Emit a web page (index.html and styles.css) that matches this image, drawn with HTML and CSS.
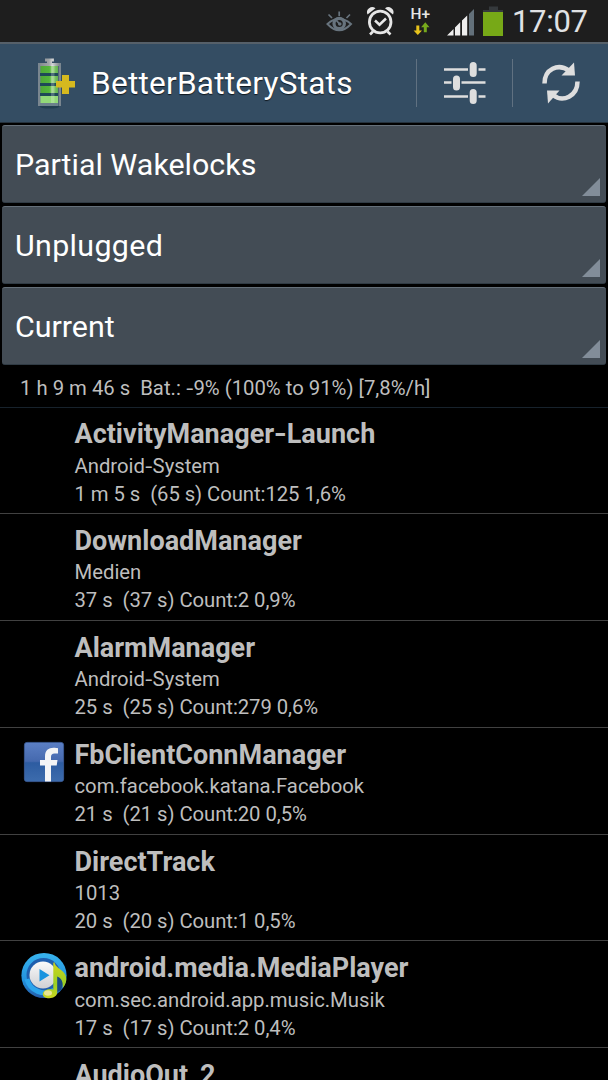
FILE: index.html
```html
<!DOCTYPE html>
<html lang="en">
<head>
<meta charset="utf-8">
<title>BetterBatteryStats</title>
<link rel="stylesheet" href="styles.css">
</head>
<body>
<div class="screen">
  <header class="status">
    <svg class="status-icons" width="204" height="42" viewBox="308 0 204 42">
      <g fill="none" stroke="#68747e">
        <path d="M327.500 24Q339.200 13.500 351 24Q339.200 36.500 327.500 24Z" stroke-width="2"/>
        <circle cx="339.200" cy="23.500" r="5.200" stroke-width="3.200"/>
        <path d="M336.500 20.500l3 3.500M339.200 11.500v4.500M328.500 14.500l3.500 3.500M350 14.500l-3.500 3.500" stroke-width="1.700"/>
      </g>
      <circle cx="339.800" cy="24" r="1.800" fill="#68747e"/>
      <g fill="none" stroke="#e6e6e6">
        <circle cx="380.200" cy="22" r="10.800" stroke-width="2.800"/>
        <path d="M375 20.500l4.500 4.200 6.500-6.200" stroke-width="2.500"/>
        <path d="M373 31.500l-3 3M387.500 31.500l3 3" stroke-width="2.600"/>
      </g>
      <path d="M367.500 14.500a5.200 5.200 0 0 1 8-6.200ZM393 14.500a5.200 5.200 0 0 0-8-6.200Z" fill="#e6e6e6"/>
      <text class="net" x="410.500" y="18.800">H+</text>
      <path d="M416.300 25.500h3v5h2.700l-4.200 4.500-4.200-4.500h2.700z" fill="#e8c31c"/>
      <path d="M425.300 22.300l4.200 5h-2.700v5h-3v-5h-2.700z" fill="#76a91c"/>
      <path d="M447 35.500l6.500-6.500v6.500zM455 27.500l5.200-5.200v13.200H455zM462 20.500l5.200-5v20H462z" fill="#eee"/>
      <path d="M469 14l5-5v26.500h-5z" fill="#63707a"/>
      <path d="M489 6.500h9v3.500h5v3h-20v-3h6z" fill="#35393c"/>
      <path d="M483 12h20v24h-20z" fill="#77a917"/>
    </svg>
    <span class="clock">17:07</span>
  </header>

  <div class="actionbar">
    <svg class="app-icon" width="40" height="54" viewBox="36 56 40 54">
      <defs>
        <linearGradient id="metal"><stop offset="0" stop-color="#7d848a"/><stop offset=".5" stop-color="#a1a5a8"/><stop offset=".65" stop-color="#d0d2d3"/><stop offset="1" stop-color="#777e84"/></linearGradient>
        <linearGradient id="cell"><stop offset="0" stop-color="#4fa837"/><stop offset=".5" stop-color="#55b63b"/><stop offset=".68" stop-color="#90cf79"/><stop offset="1" stop-color="#60b34b"/></linearGradient>
      </defs>
      <ellipse cx="49.500" cy="106.500" rx="10" ry="2" fill="#223e50"/>
      <path d="M45 58.500h9v3h-2v2h-5v-2h-2zM38 63h22v3H38z" fill="url(#metal)"/>
      <path d="M38 63h2v43h-2zM59 63h2v43h-2z" fill="#7a868f"/>
      <path d="M40 66h18.500v40H40z" fill="#6c818b"/>
      <path d="M40 73h18v3H40zM40 83h18v3H40zM40 93h18v3H40z" fill="#1f4957"/>
      <path d="M40.500 66H58v7H40.500zM40.500 76H58v7H40.500zM40.500 86H58v7H40.500z" fill="url(#cell)"/>
      <path d="M40.500 96H58v7H40.500z" fill="#92d978"/>
      <path d="M51 65h3.500v38H51z" fill="#fff" opacity=".22"/>
      <path d="M62 75h7v6h6v6.500h-6V94h-7v-6.500h-6V81h6z" fill="#d6b91f"/>
    </svg>
    <h1 class="app-title">BetterBatteryStats</h1>
    <div class="action">
      <svg width="42" height="44" viewBox="0 0 42 44">
        <path d="M0 8.500h24M34.500 8.500H41.500M0 21.500h7.500M17.500 21.500h24M0 35.500h24M34.500 35.500H41.500" stroke="#dedede" stroke-width="2.400"/>
        <path d="M29.200 4.500v8M12.500 18v8M29.200 31.500v8" stroke="#dedede" stroke-width="7" stroke-linecap="round"/>
      </svg>
    </div>
    <div class="action">
      <svg width="40" height="44" viewBox="0 0 40 44">
        <path d="M3.500 22.500C3.500 8 17 2 28 9.500" fill="none" stroke="#dedede" stroke-width="4.500"/>
        <path d="M33 1.500l1 13H20.500z" fill="#dedede"/>
        <path d="M36.500 20.500C36.500 35 22 42 12 34" fill="none" stroke="#dedede" stroke-width="4.500"/>
        <path d="M7 42.500L6 29.500H18.500z" fill="#dedede"/>
      </svg>
    </div>
  </div>

  <div class="spinners">
    <div class="spinner"><span>Partial Wakelocks</span></div>
    <div class="spinner"><span class="wide">Unplugged</span></div>
    <div class="spinner"><span>Current</span></div>
  </div>

  <div class="summary">1 h 9 m 46 s&nbsp; Bat.: <span class="dash">-</span>9% (100% to 91%) [7,8%/h]</div>

  <main class="list">
    <div class="row"><div class="icon"></div><div class="body"><h2>ActivityManager<span class="dash">-</span>Launch</h2><p>Android<span class="dash">-</span>System</p><p class="stat">1 m 5 s&nbsp; (65 s) Count:125 1,6%</p></div></div>
    <div class="row"><div class="icon"></div><div class="body"><h2>DownloadManager</h2><p>Medien</p><p class="stat">37 s&nbsp; (37 s) Count:2 0,9%</p></div></div>
    <div class="row"><div class="icon"></div><div class="body"><h2>AlarmManager</h2><p>Android<span class="dash">-</span>System</p><p class="stat">25 s&nbsp; (25 s) Count:279 0,6%</p></div></div>
    <div class="row">
      <div class="icon">
        <svg width="48" height="48" viewBox="0 0 48 48">
          <defs><linearGradient id="fb" x2="0" y2="1"><stop offset="0" stop-color="#5b7fc4"/><stop offset=".48" stop-color="#4569ae"/><stop offset=".52" stop-color="#2d5ca1"/><stop offset="1" stop-color="#3d6cad"/></linearGradient></defs>
          <rect x="4.400" y="4.400" width="39.200" height="39.200" rx="2.500" fill="url(#fb)" stroke="#3d5f9c" stroke-width=".8"/>
          <path d="M25 43.500V27.500H20V22h5v-3.500c0-6 3.500-8.700 8.500-8.700 2 0 3.500.2 4.500.5v5.200h-3.500c-2.500 0-3.500 1.200-3.500 3.500v3h6.500l-.8 5.500H31v16z" fill="#f3f4f6"/>
        </svg>
      </div>
      <div class="body"><h2>FbClientConnManager</h2><p>com.facebook.katana.Facebook</p><p class="stat">21 s&nbsp; (21 s) Count:20 0,5%</p></div>
    </div>
    <div class="row"><div class="icon"></div><div class="body"><h2>DirectTrack</h2><p>1013</p><p class="stat">20 s&nbsp; (20 s) Count:1 0,5%</p></div></div>
    <div class="row">
      <div class="icon">
        <svg width="48" height="48" viewBox="0 0 48 48">
          <defs>
            <linearGradient id="ring" x2="0" y2="1"><stop offset="0" stop-color="#38b4ef"/><stop offset=".6" stop-color="#2492dd"/><stop offset="1" stop-color="#245ba8"/></linearGradient>
            <linearGradient id="disc" x2="0" y2="1"><stop offset="0" stop-color="#fafafa"/><stop offset="1" stop-color="#cfd0d4"/></linearGradient>
            <linearGradient id="note" x2="0" y2="1"><stop offset="0" stop-color="#d0d51c"/><stop offset=".6" stop-color="#9bcf24"/><stop offset="1" stop-color="#c9d61f"/></linearGradient>
          </defs>
          <circle cx="24" cy="24.500" r="22.600" fill="url(#ring)"/>
          <circle cx="23.500" cy="24" r="17" fill="#1f5fae"/>
          <path d="M7 28a18 18 0 0 0 27 11" fill="none" stroke="#2ba4ec" stroke-width="5"/>
          <circle cx="23" cy="24" r="13.500" fill="url(#disc)"/>
          <path d="M19.500 18l10 6.200-10 6.300z" fill="#1993df"/>
          <path d="M36 15l9 12-4 12-6 3z" fill="#174983"/>
          <path d="M34.300 11c1 7 12.700 8 12 18-.3 4-2.500 6.500-3.500 8 .2-6-.8-9.500-5.600-11.500V41c0 4-3.500 6.200-8 6.200-3.600 0-6.400-1.200-6.400-4 0-3.500 5-5.700 10.500-4.500V12z" fill="url(#note)"/>
          <ellipse cx="28" cy="42" rx="4" ry="2.800" fill="#f3eab0" opacity=".8"/>
        </svg>
      </div>
      <div class="body"><h2>android.media.MediaPlayer</h2><p>com.sec.android.app.music.Musik</p><p class="stat">17 s&nbsp; (17 s) Count:2 0,4%</p></div>
    </div>
    <div class="row"><div class="icon"></div><div class="body"><h2>AudioOut_2</h2></div></div>
  </main>
</div>
</body>
</html>
```

FILE: styles.css
```css
* { box-sizing: border-box; }
body { margin: 0; background: #000; font-family: Roboto, "Noto Sans", sans-serif; }
h1, h2, p { margin: 0; font-weight: 400; }
svg { display: block; }
.screen { width: 608px; height: 1080px; overflow: hidden; background: #000; display: flex; flex-direction: column; }
.status { height: 42px; flex: none; background: #1e1e1e; display: flex; justify-content: flex-end; }
.status-icons { flex: none; }
.net { font: 500 15.5px Roboto, sans-serif; fill: #e6e6e6; }
.clock { width: 96px; color: #e0e2e4; font-size: 31px; line-height: 43px; letter-spacing: -0.3px; }
.actionbar { height: 81px; flex: none; background: #344d63; border-top: 2px solid #566069; border-bottom: 1px solid #25323d; display: flex; align-items: center; padding-left: 36px; }
.app-icon { flex: none; }
.app-title { flex: 1; padding: 2px 0 0 15px; font-size: 31.6px; line-height: 40px; letter-spacing: 0.22px; color: #fff; white-space: nowrap; text-shadow: 0 1px 1px #10181f; }
.action { width: 96px; height: 48px; border-left: 1px solid #607181; display: flex; align-items: center; justify-content: center; }
.spinners { display: flex; flex-direction: column; gap: 3px; padding: 2px 2px 0 2px; flex: none; }
.spinner { position: relative; height: 78px; background: #434c55; border-radius: 3px; border-top: 1px solid #65707a; border-bottom: 1px solid #303b44; color: #fff; font-size: 30.4px; line-height: 78px; padding-left: 13px; }
.spinner::after { content: ""; position: absolute; right: 6px; bottom: 6px; width: 18px; height: 18px; background: #828d99; clip-path: polygon(100% 0, 100% 100%, 0 100%); }
.wide { letter-spacing: 0.35px; }
.dash { display: inline-block; transform: scaleX(1.25); margin: 0 1px; }
.summary { height: 43px; flex: none; padding-left: 20px; color: #bebebe; font-size: 20.3px; line-height: 46px; white-space: nowrap; border-bottom: 1px solid #17222c; }
.list { flex: 1; margin-top: -1px; }
.row { height: 106.9px; display: flex; border-bottom: 1px solid #414141; }
.icon { width: 74px; padding: 10px 0 0 20px; flex: none; }
.body { color: #bebebe; white-space: nowrap; font-size: 20.3px; padding: 9px 0 0 0.5px; }
.body h2 { font-size: 27px; line-height: 36px; font-weight: 700; }
.body p { line-height: 28px; margin-top: -0.5px; }
.body .stat { letter-spacing: -0.06px; margin-top: 0; }
```
